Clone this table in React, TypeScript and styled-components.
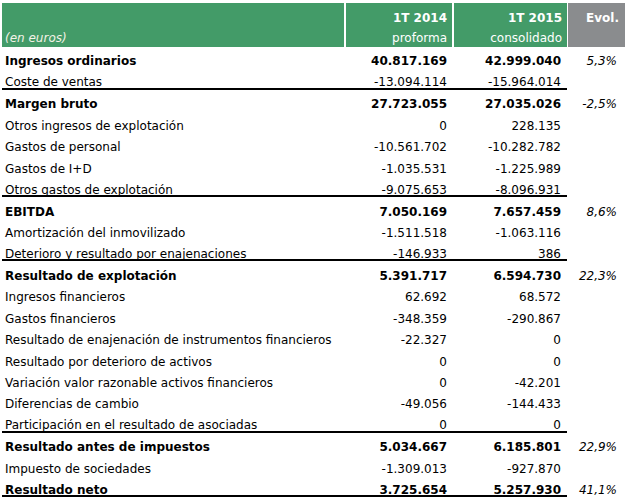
import React from "react";
import styled, { createGlobalStyle } from "styled-components";

const GlobalStyle = createGlobalStyle`
  html, body { margin: 0; padding: 0; background: #ffffff; }
  body { font-family: "DejaVu Sans", Verdana, sans-serif; font-size: 12px; color: #000; }
`;

const Sheet = styled.div`
  margin: 3px 0 0 2px;
  width: 623px;
`;

const Line = styled.div<{ $header?: boolean }>`
  display: grid;
  grid-template-columns: 565px 57px;
  grid-template-rows: ${(p) => (p.$header ? "44px" : "21.45px")};
  column-gap: 1px;
  height: ${(p) => (p.$header ? "44px" : "21.45px")};
`;

const Main = styled.div<{ $ruled?: boolean }>`
  display: grid;
  grid-template-columns: 342px 106px 113px;
  grid-template-rows: 100%;
  column-gap: 2px;
  height: 100%;
  min-height: 0;
  box-sizing: border-box;
  padding-bottom: ${(p) => (p.$ruled ? "0.5px" : "0")};
  box-shadow: ${(p) => (p.$ruled ? "inset 0 -2px 0 #000" : "none")};
`;

const HeadCell = styled.div<{ $align?: "left" | "right"; $grey?: boolean }>`
  background: ${(p) => (p.$grey ? "#8a8c8e" : "#439b68")};
  color: #ffffff;
  box-sizing: border-box;
  padding: 5px ${(p) => (p.$align === "left" ? "0" : "5px")} 0 ${(p) => (p.$align === "left" ? "3px" : "0")};
  text-align: ${(p) => p.$align ?? "right"};
  line-height: 21px;
  white-space: nowrap;
  overflow: hidden;
`;

const Strong = styled.div`
  font-weight: bold;
  height: 20px;
`;

const Sub = styled.div<{ $italic?: boolean }>`
  height: 21px;
  font-style: ${(p) => (p.$italic ? "italic" : "normal")};
  color: ${(p) => (p.$italic ? "#f3f2e6" : "#ffffff")};
`;

const EvolHead = styled(HeadCell)`
  padding-right: 6px;
  font-weight: bold;
`;

const Label = styled.div<{ $bold?: boolean }>`
  align-self: end;
  padding-left: 3px;
  line-height: 14px;
  font-weight: ${(p) => (p.$bold ? "bold" : "normal")};
  white-space: nowrap;
`;

const Num = styled.div<{ $bold?: boolean; $pad: number }>`
  align-self: end;
  padding-right: ${(p) => p.$pad}px;
  line-height: 14px;
  text-align: right;
  font-weight: ${(p) => (p.$bold ? "bold" : "normal")};
  white-space: nowrap;
`;

const Evol = styled.div<{ $ruled?: boolean }>`
  align-self: end;
  padding: 0 8px ${(p) => (p.$ruled ? "0.5px" : "0")} 0;
  line-height: 14px;
  text-align: right;
  font-style: italic;
  white-space: nowrap;
`;

type Row = { label: string; a: string; b: string; evol?: string; bold?: boolean; ruled?: boolean };

const rows: Row[] = [
  { label: "Ingresos ordinarios", a: "40.817.169", b: "42.999.040", evol: "5,3%", bold: true },
  { label: "Coste de ventas", a: "-13.094.114", b: "-15.964.014", ruled: true },
  { label: "Margen bruto", a: "27.723.055", b: "27.035.026", evol: "-2,5%", bold: true },
  { label: "Otros ingresos de explotación", a: "0", b: "228.135" },
  { label: "Gastos de personal", a: "-10.561.702", b: "-10.282.782" },
  { label: "Gastos de I+D", a: "-1.035.531", b: "-1.225.989" },
  { label: "Otros gastos de explotación", a: "-9.075.653", b: "-8.096.931", ruled: true },
  { label: "EBITDA", a: "7.050.169", b: "7.657.459", evol: "8,6%", bold: true },
  { label: "Amortización del inmovilizado", a: "-1.511.518", b: "-1.063.116" },
  { label: "Deterioro y resultado por enajenaciones", a: "-146.933", b: "386", ruled: true },
  { label: "Resultado de explotación", a: "5.391.717", b: "6.594.730", evol: "22,3%", bold: true },
  { label: "Ingresos financieros", a: "62.692", b: "68.572" },
  { label: "Gastos financieros", a: "-348.359", b: "-290.867" },
  { label: "Resultado de enajenación de instrumentos financieros", a: "-22.327", b: "0" },
  { label: "Resultado por deterioro de activos", a: "0", b: "0" },
  { label: "Variación valor razonable activos financieros", a: "0", b: "-42.201" },
  { label: "Diferencias de cambio", a: "-49.056", b: "-144.433" },
  { label: "Participación en el resultado de asociadas", a: "0", b: "0", ruled: true },
  { label: "Resultado antes de impuestos", a: "5.034.667", b: "6.185.801", evol: "22,9%", bold: true },
  { label: "Impuesto de sociedades", a: "-1.309.013", b: "-927.870" },
  { label: "Resultado neto", a: "3.725.654", b: "5.257.930", evol: "41,1%", bold: true, ruled: true },
];

export default function App() {
  return (
    <>
      <GlobalStyle />
      <Sheet>
        <Line $header>
          <Main>
            <HeadCell $align="left">
              <Strong />
              <Sub $italic>(en euros)</Sub>
            </HeadCell>
            <HeadCell>
              <Strong>1T 2014</Strong>
              <Sub>proforma</Sub>
            </HeadCell>
            <HeadCell>
              <Strong>1T 2015</Strong>
              <Sub>consolidado</Sub>
            </HeadCell>
          </Main>
          <EvolHead $grey>Evol.</EvolHead>
        </Line>
        {rows.map((r) => (
          <Line key={r.label}>
            <Main $ruled={r.ruled}>
              <Label $bold={r.bold}>{r.label}</Label>
              <Num $bold={r.bold} $pad={5}>{r.a}</Num>
              <Num $bold={r.bold} $pad={6}>{r.b}</Num>
            </Main>
            <Evol $ruled={r.ruled}>{r.evol ?? ""}</Evol>
          </Line>
        ))}
      </Sheet>
    </>
  );
}
